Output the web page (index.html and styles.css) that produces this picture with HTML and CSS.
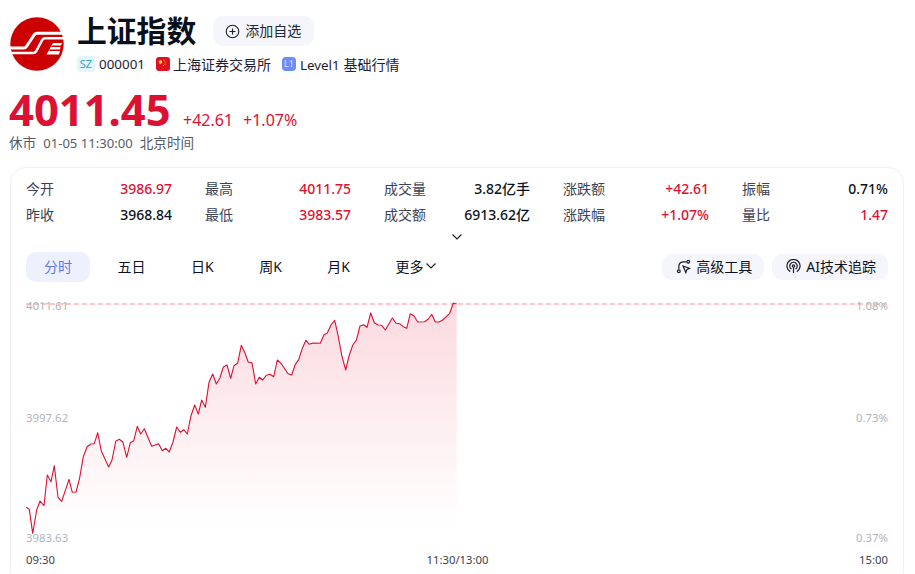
FILE: index.html
```html
<!DOCTYPE html>
<html lang="zh-CN">
<head>
<meta charset="utf-8">
<title>上证指数</title>
<link rel="stylesheet" href="styles.css">
</head>
<body>
<header class="head">
  <svg class="logo" viewBox="0 0 54 54" aria-hidden="true">
    <circle cx="27" cy="27" r="26.7" fill="#cc0000"/>
    <path d="M0 31H14Q15.500 31 16.500 29.500L24.500 17.500Q25.500 16.300 27 16.300H54" fill="none" stroke="#fff" stroke-width="3"/>
    <path d="M0 36H23Q25 36 26 34.500L32.500 22.500Q33.500 21.300 35 21.300H54" fill="none" stroke="#fff" stroke-width="2.500"/>
    <path d="M43 26H52L51 28.500H42L41 30H50.500L50 32.500H40L39 34H50L49 37.500H36.500Z" fill="#fff"/>
  </svg>
  <div class="head-main">
    <div class="title-row">
      <h1 class="title">上证指数</h1>
      <button class="fav">
        <svg class="ic15" viewBox="0 0 16 16" aria-hidden="true"><circle cx="8" cy="8" r="6.700" fill="none" stroke="#1a1f2e" stroke-width="1.200"/><path d="M8 4.800V11.200M4.800 8H11.200" stroke="#1a1f2e" stroke-width="1.200"/></svg>
        添加自选
      </button>
    </div>
    <div class="meta-row">
      <span class="meta"><span class="tag-sz">SZ</span><span class="num">000001</span></span>
      <span class="meta tight"><span class="flag"><svg viewBox="0 0 14 14" aria-hidden="true"><circle cx="4.500" cy="5" r="1.800" fill="#ffd23c"/><circle cx="8" cy="3" r=".6" fill="#ffd23c"/><circle cx="9" cy="5" r=".6" fill="#ffd23c"/><circle cx="9" cy="7" r=".6" fill="#ffd23c"/><circle cx="7.500" cy="8.500" r=".6" fill="#ffd23c"/></svg></span>上海证券交易所</span>
      <span class="meta"><span class="tag-l1">L1</span><span><span class="num">Level1</span> 基础行情</span></span>
    </div>
  </div>
</header>

<section class="quote">
  <div class="price-row">
    <span class="price">4011.45</span>
    <span class="chg">+42.61</span>
    <span class="chg">+1.07%</span>
  </div>
  <div class="time"><span>休市</span><span class="num">01-05 11:30:00</span><span>北京时间</span></div>
</section>

<main class="card">
  <div class="stats">
    <div class="stat"><span class="k">今开</span><span class="v up">3986.97</span></div>
    <div class="stat"><span class="k">最高</span><span class="v up">4011.75</span></div>
    <div class="stat"><span class="k">成交量</span><span class="v">3.82亿手</span></div>
    <div class="stat"><span class="k">涨跌额</span><span class="v up">+42.61</span></div>
    <div class="stat"><span class="k">振幅</span><span class="v">0.71%</span></div>
    <div class="stat"><span class="k">昨收</span><span class="v">3968.84</span></div>
    <div class="stat"><span class="k">最低</span><span class="v up">3983.57</span></div>
    <div class="stat"><span class="k">成交额</span><span class="v">6913.62亿</span></div>
    <div class="stat"><span class="k">涨跌幅</span><span class="v up">+1.07%</span></div>
    <div class="stat"><span class="k">量比</span><span class="v up">1.47</span></div>
  </div>
  <div class="expand">
    <svg class="chev" viewBox="0 0 12 8" aria-hidden="true"><path d="M1.500 1.500 6 6 10.500 1.500" fill="none" stroke="#222" stroke-width="1.200"/></svg>
  </div>
  <div class="toolbar">
    <nav class="tabs">
      <span class="tab active">分时</span>
      <span class="tab">五日</span>
      <span class="tab">日K</span>
      <span class="tab">周K</span>
      <span class="tab">月K</span>
      <span class="tab">更多<svg class="chev" viewBox="0 0 12 8" aria-hidden="true"><path d="M1.500 1.500 6 6 10.500 1.500" fill="none" stroke="#222" stroke-width="1.200"/></svg></span>
    </nav>
    <div class="tools">
      <span class="tool">
        <svg class="ic15" viewBox="0 0 16 16" aria-hidden="true"><g fill="none" stroke="#1a1f2e" stroke-width="1.300"><circle cx="3" cy="13" r="1.500"/><circle cx="13" cy="3" r="1.500"/><path d="M3 11V8Q3 3.500 7.500 3H11"/><path d="M7.500 7.500 14.500 10 11.500 11.500 10.500 14.500Z"/></g></svg>
        高级工具
      </span>
      <span class="tool">
        <svg class="ic15" viewBox="0 0 16 16" aria-hidden="true"><g fill="none" stroke="#1a1f2e" stroke-width="1.300"><path d="M4.500 13.500A7 7 0 1 1 11.500 13.500"/><path d="M5.800 10.800A4 4 0 1 1 10.200 10.800"/><circle cx="8" cy="7.500" r="1.300"/><path d="M8 9V15"/></g></svg>
        AI技术追踪
      </span>
    </div>
  </div>
  <svg class="chart" viewBox="26 295 862 279" role="img" aria-label="分时图">
    <defs>
      <linearGradient id="area" gradientUnits="userSpaceOnUse" x1="0" y1="303" x2="0" y2="526">
        <stop offset="0" stop-color="#e5173a" stop-opacity=".16"/>
        <stop offset="1" stop-color="#e5173a" stop-opacity="0"/>
      </linearGradient>
    </defs>
    <path class="dash" d="M26 304H888"/>
    <polygon fill="url(#area)" points="26,507.300 29.300,509.300 32.700,533.300 36.700,510 40,501 44,505.700 47.300,475 51,481.700 54.300,465.700 58,497.300 61.700,501.300 69,479.300 72.300,492.300 76,492 79.700,477.700 83.300,456.700 87,447 90.700,444 94.300,443.700 97.700,432.700 101.300,451 108.700,467 112,460 115.700,441.300 119.300,439.300 123,442.300 126.700,457.300 130.300,442.700 133.700,440.700 137.300,426.300 140.700,434 144.300,428.700 151.700,446.300 158.700,443.700 162.300,450.700 165.700,448.300 169.300,452 173,442 176.700,427 180.300,432.300 183.700,429.700 187.300,434 191,415.700 194.700,405 198.300,414 201.700,400 205.300,407.300 209,382.300 212.700,374 216.300,384 220,377.700 223.300,367 227,365 230.700,378.300 234,365.700 237.700,363 241.300,345.300 244.700,352.300 248.300,362.300 252,362.700 255.700,384 259.300,377.300 262.700,380 266.300,375.300 270,374.300 273.700,376.700 277.300,360 281,363.300 288,373.700 291.700,375 295.300,364.300 298.700,359.700 302.300,348.300 306,340.300 309.300,344.300 313,343 320.300,343.300 324,334.700 327.300,333 331,325 334.700,320.300 338.300,336.700 342,356.300 345.700,370 349,356 352.700,345.300 356.300,340.300 360,326 363.700,324.700 367,327.300 370.700,313 374.300,322.700 378,325 381.700,325.300 385.300,330 392.300,318 396,323.300 399.700,323.700 403.300,326.700 406.700,328.300 410.300,313.700 414,316 417.700,322 424.700,321.700 428.300,319 431.700,314.300 435.300,322 439,322 442.700,320 449.700,313.300 453.300,303 456.700,304 456.700,526 26,526"/>
    <polyline class="line" points="26,507.300 29.300,509.300 32.700,533.300 36.700,510 40,501 44,505.700 47.300,475 51,481.700 54.300,465.700 58,497.300 61.700,501.300 69,479.300 72.300,492.300 76,492 79.700,477.700 83.300,456.700 87,447 90.700,444 94.300,443.700 97.700,432.700 101.300,451 108.700,467 112,460 115.700,441.300 119.300,439.300 123,442.300 126.700,457.300 130.300,442.700 133.700,440.700 137.300,426.300 140.700,434 144.300,428.700 151.700,446.300 158.700,443.700 162.300,450.700 165.700,448.300 169.300,452 173,442 176.700,427 180.300,432.300 183.700,429.700 187.300,434 191,415.700 194.700,405 198.300,414 201.700,400 205.300,407.300 209,382.300 212.700,374 216.300,384 220,377.700 223.300,367 227,365 230.700,378.300 234,365.700 237.700,363 241.300,345.300 244.700,352.300 248.300,362.300 252,362.700 255.700,384 259.300,377.300 262.700,380 266.300,375.300 270,374.300 273.700,376.700 277.300,360 281,363.300 288,373.700 291.700,375 295.300,364.300 298.700,359.700 302.300,348.300 306,340.300 309.300,344.300 313,343 320.300,343.300 324,334.700 327.300,333 331,325 334.700,320.300 338.300,336.700 342,356.300 345.700,370 349,356 352.700,345.300 356.300,340.300 360,326 363.700,324.700 367,327.300 370.700,313 374.300,322.700 378,325 381.700,325.300 385.300,330 392.300,318 396,323.300 399.700,323.700 403.300,326.700 406.700,328.300 410.300,313.700 414,316 417.700,322 424.700,321.700 428.300,319 431.700,314.300 435.300,322 439,322 442.700,320 449.700,313.300 453.300,303 456.700,304"/>
    <text class="ax" x="26" y="310">4011.61</text>
    <text class="ax" x="26" y="422">3997.62</text>
    <text class="ax" x="26" y="542">3983.63</text>
    <text class="ax end" x="888" y="310">1.08%</text>
    <text class="ax end" x="888" y="422">0.73%</text>
    <text class="ax end" x="888" y="542">0.37%</text>
    <text class="tm" x="26" y="564">09:30</text>
    <text class="tm mid" x="457.500" y="564">11:30/13:00</text>
    <text class="tm end" x="888" y="564">15:00</text>
  </svg>
</main>
</body>
</html>
```
FILE: styles.css
```css
* { box-sizing: border-box; }
html, body { height: 574px; overflow: hidden; }
body {
  margin: 0;
  background: #fff;
  color: #0d1220;
  font-family: "Noto Sans", "Noto Sans CJK SC", sans-serif;
}
.head { display: flex; gap: 13px; padding: 16px 0 0 10px; }
.logo { width: 54px; height: 54px; margin-top: 1px; flex: none; }
.head-main { display: flex; flex-direction: column; }
.title-row { display: flex; align-items: center; gap: 17px; height: 30px; }
.title { margin: 0; font-size: 29.800px; line-height: 30px; font-weight: 700; color: #0a0f1c; }
.fav {
  display: flex; align-items: center; gap: 5px;
  height: 30px; width: 101px; padding: 0 0 0 12px;
  border: 0; border-radius: 10px; background: #f4f6fb;
  font: 14px/30px "Noto Sans", "Noto Sans CJK SC", sans-serif; color: #222733;
}
.ic15 { width: 15px; height: 15px; flex: none; }
.meta-row { display: flex; gap: 11px; margin-top: 8px; height: 20px; align-items: center; font-size: 14px; color: #1c2130; }
.meta { display: flex; align-items: center; gap: 4px; }
.meta.tight { gap: 3px; }
.num { font-size: 13.400px; }
.tag-sz {
  width: 18px; height: 16px; border-radius: 3px; background: #e5f6fb; color: #2aa7c9;
  font-size: 11px; line-height: 16px; text-align: center;
}
.flag { width: 14px; height: 14px; border-radius: 3px; background: #de1021; display: block; }
.flag svg { display: block; }
.tag-l1 {
  width: 14px; height: 14px; border-radius: 4px; background: #6d8cf5; color: #dfe6fd;
  font-size: 9px; line-height: 14px; text-align: center;
}
.quote { padding: 0 0 0 9px; margin-top: 13px; }
.price-row { display: flex; align-items: baseline; height: 44px; }
.price { font-size: 43.500px; line-height: 44px; font-weight: 700; color: #dc1032; width: 174px; }
.chg { font-size: 16px; color: #dc1032; margin-right: 10px; }
.time { display: flex; gap: 7px; font-size: 13.600px; line-height: 18px; color: #555b66; margin-top: 3px; }
.time .num { font-size: 13.100px; }
.card {
  margin: 15px 11px 0 10px;
  padding: 7px 15px 0;
  height: 420px;
  border: 1px solid #eff0f3;
  border-radius: 16px;
  background: #fff;
}
.stats { display: grid; grid-template-columns: repeat(5, 1fr); column-gap: 33px; row-gap: 0; }
.stat { display: flex; justify-content: space-between; height: 26px; align-items: center; font-size: 14px; }
.k { color: #3c4250; font-size: 14px; }
.v { font-weight: 500; color: #0d1220; font-size: 14px; }
.up { color: #dc1032; }
.expand { display: flex; justify-content: center; height: 20px; align-items: center; }
.chev { width: 12px; height: 8px; flex: none; display: block; }
.toolbar { display: flex; justify-content: space-between; align-items: center; height: 30px; margin-top: 5px; }
.tabs { display: flex; gap: 9.500px; }
.tab {
  display: flex; align-items: center; gap: 1px;
  height: 30px; padding: 0 18px 2px; border-radius: 10px;
  font-size: 14px; color: #0d1220;
}
.tab.active { background: #edf0fd; color: #5a79f0; }
.tools { display: flex; gap: 8px; }
.tool {
  display: flex; align-items: center; gap: 5px;
  height: 26px; padding: 0 12px 2px 14px; border-radius: 10px;
  background: #f4f6fb; font-size: 14px; color: #0d1220;
}
.chart { display: block; width: 862px; height: 279px; margin-top: 13px; overflow: visible; }
.dash { stroke: #f98d96; stroke-width: 1; stroke-dasharray: 5 3; fill: none; }
.line { fill: none; stroke: #dc1032; stroke-width: 1.100; stroke-linejoin: round; }
.ax { font-size: 11.400px; fill: #b0b4bd; }
.tm { font-size: 11.300px; fill: #3c4250; }
.end { text-anchor: end; }
.mid { text-anchor: middle; }
```
